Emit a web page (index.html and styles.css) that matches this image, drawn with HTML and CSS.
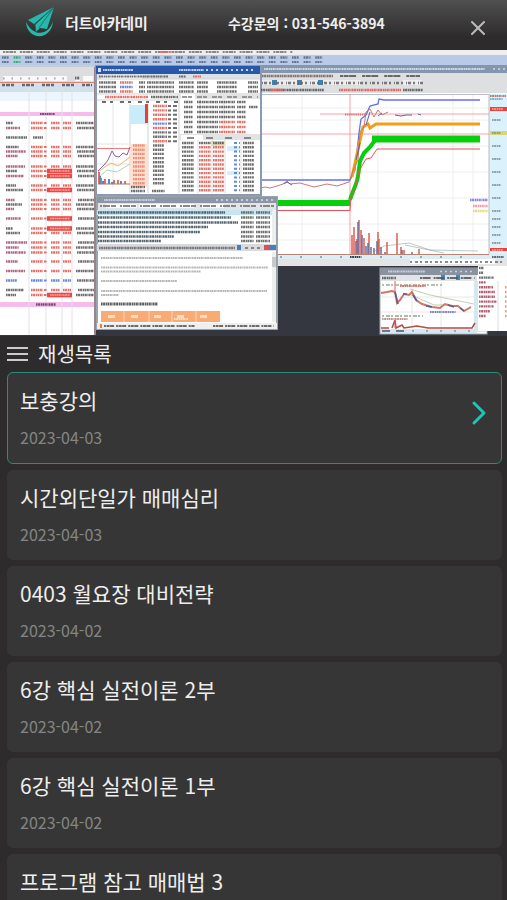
FILE: index.html
```html
<!DOCTYPE html>
<html lang="ko">
<head>
    <meta charset="UTF-8">
    <meta name="viewport" content="width=device-width, initial-scale=1.0">
    <title>더트아카데미</title>
    <link rel="stylesheet" href="styles.css">
</head>
<body>
    <header class="header">
        <a class="logo" href="#">
            <svg class="logo-icon" viewBox="0 0 28 30" aria-hidden="true">
                <path d="M28 0 L2 13 L8 17 Z M28 0 L9 18 L10 25 L14 21 L21 22 Z" fill="#25b8ab"/>
                <path d="M28 0 L9 17 L10 24 M28 0 L13 21" fill="none" stroke="#23635f" stroke-width=".8"/>
                <path d="M0 15 C1 34 26 34 27 14 C23 28 8 31 0 15 Z" fill="#25b8ab"/>
            </svg>
            <span>더트아카데미</span>
        </a>
        <p class="phone">수강문의 : 031-546-3894</p>
        <button class="close" aria-label="닫기">
            <svg viewBox="0 0 14 14"><path d="M1 1 L13 13 M13 1 L1 13"/></svg>
        </button>
    </header>

    <main class="main">
        <svg class="video" viewBox="0 50 507 286" role="img" aria-label="강의 영상">
            <rect y="50" width="507" height="286" fill="#343740"/>
            <!-- menu and toolbar -->
            <rect y="50" width="507" height="5" fill="#eeeeef"/>
            <rect y="55" width="507" height="11" fill="#b9cae9"/>
            <rect y="65" width="507" height="6" fill="#c7ccd5"/>
            <!-- stock list -->
            <rect y="67" width="96" height="268" fill="#fff"/>
            <rect y="67" width="96" height="16" fill="#dcdddf"/>
            <path d="M3 76h64v5H3zM75 76h5v5h-5zM83 76h10v5H83z" fill="#f9f9f9"/>
            <rect y="83" width="95" height="9" fill="#d2e0ee"/>
            <rect y="92" width="95" height="9" fill="#edf6fd"/>
            <rect y="112" width="95" height="4" fill="#f5bcec"/>
            <rect y="302" width="95" height="5" fill="#f5bcec"/>
            <path d="M29 83V335M46 83V335M62 83V335M72 83V335" stroke="#e3e0e6"/>
            <path d="M0 82.500H95" stroke="#d78378"/>
            <path d="M95 67V335" stroke="#98858a" stroke-width="2"/>
            <!-- big chart -->
            <rect x="260" y="66" width="247" height="200" fill="#fff"/>
            <rect x="260" y="65" width="247" height="8" fill="#8496ae"/>
            <rect x="260" y="73" width="247" height="20" fill="#dedfe1"/>
            <path d="M261 80h100v5H261zM403 80h19v5h-19z" fill="#eee"/>
            <path d="M272 80h5v5h-5zM297 80h5v5h-5zM318 80h5v5h-5z" fill="#3c82b3"/>
            <rect x="489" y="94" width="18" height="161" fill="#dbf1fb"/>
            <rect x="260" y="254" width="247" height="5" fill="#dbeef5"/>
            <rect x="260" y="259" width="247" height="7" fill="#e4e4e5"/>
            <path d="M410 259h85v5h-85z" fill="#fff"/>
            <path d="M260 108H489M260 120H489M260 146H489M260 172H489M260 198H489M260 224H489M260 240H489M302 94V254M378 94V254M453 94V254M473 94V254" stroke="#eeeeef"/>
            <path d="M260 94.500H489M489 94V254" stroke="#b8bdc5" fill="none"/>
            <path d="M350 94V254M260 134H489M320 114H489" stroke="#f18a95" stroke-width=".8"/>
            <path d="M277 203H350" stroke="#07cf0b" stroke-width="6"/>
            <path d="M350 200C353 190 357 184 358 176L360 161L364 153L370 147L376 139H480" fill="none" stroke="#07cf0b" stroke-width="4"/>
            <path d="M372 139H480" stroke="#07cf0b" stroke-width="7"/>
            <path d="M260 180H350L355 170L359 133L361 119L366 115L370 106L378 104L379 99L384 100H480" fill="none" stroke="#6670e5" stroke-width="1.300"/>
            <path d="M352 177L359 145L363 127L368 124L370 128L376 124H480" fill="none" stroke="#f49d16" stroke-width="3"/>
            <path d="M277 210.500H350L351 196L355 189L359 171L366 159L371 158L377 149H480" fill="none" stroke="#e95058" stroke-width="1"/>
            <path d="M260 188L265 187L270 188L277 186L283 184L287 181L290 184L300 183L314 187L327 184L337 186L349 182L354 168L358 160L360 132L364 127L366 112L370 109L374 117L378 110L382 115L388 112" fill="none" stroke="#c67970" stroke-width="1"/>
            <path d="M284 184L287 182L292 185M356 160L360 143M366 125L370 112M378 116L382 113M395 115L401 116L406 115L412 115M418 114L421 115" fill="none" stroke="#5961ad" stroke-width="1"/>
            <path d="M345 114.500H366" stroke="#e86c6c" stroke-width="2" stroke-dasharray="1.300 .8"/>
            <path d="M373 252L384 246L409 243L430 250L478 251M405 245L444 253" fill="none" stroke="#89a695" stroke-width=".6"/>
            <path id="volume" d="M352 254V235M354 254V227M357 254V239M359 254V220M361 254V230M364 254V238M369 254V233M378 254V232M379 254V239M387 254V242M397 254V233M401 254V247M404 254V250M419 254V249" stroke="#dc5f50" stroke-width="1.500" fill="none"/>
            <path d="M356 254V241M358 254V222M362 254V235M366 254V246M368 254V243M371 254V247M374 254V248M377 254V241M381 254V247M385 254V252M402 254V250M412 254V252" stroke="#6b6c9f" stroke-width="1.500" fill="none"/>
            <path d="M260 254.500H489" stroke="#b78372" stroke-width="1"/>
            <path d="M490 107h17v4h-17zM490 248h17v3h-17z" fill="#ed4038"/>
            <path d="M490 131h17v4h-17z" fill="#dbd86a"/>
            <!-- current price window -->
            <rect x="96" y="66" width="165" height="129" fill="#fff" stroke="#8b99b2" stroke-width="2"/>
            <rect x="96" y="66" width="164" height="8" fill="#2858aa"/>
            <rect x="98" y="68" width="3" height="4" fill="#d3def8"/>
            <rect x="97" y="74" width="163" height="5" fill="#dde0e4"/>
            <path d="M101 75h41v4h-41z" fill="#fff"/>
            <path d="M97 79H260M97 94H260M97 100H179M179 94V193M130 104V193M148 104V193" stroke="#cfd1d4" fill="none"/>
            <path d="M130 105H146V124H130z" fill="#c9edf8"/>
            <rect x="145" y="104" width="3" height="19" fill="#e54137"/>
            <path d="M113 104V188M97 144H130M97 164H130" stroke="#e5e5e5"/>
            <path d="M97 148.500H130" stroke="#f27979"/>
            <rect x="130" y="144" width="18" height="43" fill="#ffe0d2"/>
            <path d="M98 171L104 165L108 160L112 151L115 156L119 157L123 153L127 155L130 147" fill="none" stroke="#8765ab"/>
            <path d="M98 172L105 167L111 163L118 166L130 157" fill="none" stroke="#ebb660"/>
            <path d="M98 178L107 170L117 172L130 164" fill="none" stroke="#9ac6b1" stroke-width=".8"/>
            <path d="M99 184V172M101 184V178M105 184V179M114 184V180M118 184V180M125 184V181" stroke="#e26f57" stroke-width="2"/>
            <path d="M100 184V176M103 184V181M109 184V179M112 184V182M121 184V181" stroke="#508cc4" stroke-width="2"/>
            <path d="M98 184H130" stroke="#a77867"/>
            <path d="M179 94H260V99H179zM179 134H260V140H179z" fill="#e2e3e4"/>
            <rect x="181" y="94" width="14" height="5" fill="#fff"/>
            <rect x="181" y="135" width="22" height="5" fill="#fff"/>
            <path d="M200 99V132M224 99V132M198 140V193M212 140V193M225 140V193M241 140V193" stroke="#dedede"/>
            <path d="M211 141h14v5h-14z" fill="#dce6b5"/>
            <path d="M227 146h13v5h-13zM227 171h13v4h-13z" fill="#d6efff"/>
            <!-- news window -->
            <rect x="97" y="197" width="180" height="132" fill="#fff" stroke="#9ba3ac" stroke-width="2"/>
            <rect x="97" y="197" width="180" height="6" fill="#8d96a4"/>
            <rect x="98" y="203" width="178" height="7" fill="#e3e4e5"/>
            <path d="M106 204h31v4h-31zM139 204h55v4h-55zM202 204h22v4h-22z" fill="#fafafa"/>
            <rect x="97" y="210" width="176" height="5" fill="#c7e6f5"/>
            <rect x="97" y="244" width="179" height="7" fill="#d8dadd"/>
            <path d="M237 245h4v5h-4zM270 245h6v5h-6z" fill="#437fc3"/>
            <path d="M264 245h6v5h-6z" fill="#e24c59"/>
            <path d="M272 211h4v32h-4zM272 252h4v70h-4z" fill="#eeeeef"/>
            <path d="M272 257h4v10h-4z" fill="#c8c9cc"/>
            <rect x="101" y="311" width="119" height="11" fill="#faaa73"/>
            <path d="M124 311V322M149 311V322M172 311V322M196 311V322" stroke="#ffd5ba"/>
            <rect x="97" y="323" width="180" height="6" fill="#eeefef"/>
            <path d="M100 324h2v4h-2z" fill="#ed7a44"/>
            <!-- small chart -->
            <rect x="380" y="268" width="107" height="66" fill="#fff" stroke="#9da7b2"/>
            <rect x="380" y="268" width="98" height="7" fill="#8992a1"/>
            <rect x="381" y="275" width="96" height="6" fill="#e1e3e5"/>
            <path d="M441 275h4v5h-4zM456 275h4v5h-4z" fill="#4788bd"/>
            <path d="M474 281h12v51h-12zM381 329h96v4h-96z" fill="#d5e8ef"/>
            <path d="M412 282V330M441 282V330M381 297H474M381 312H474" stroke="#ebe6e6"/>
            <path d="M410 289L430 295L474 304M409 294L434 305L448 305" fill="none" stroke="#a3bc9c" stroke-width=".7"/>
            <path d="M381 293L387 292L392 291L395 292L397 303L400 300L404 294L409 295L412 292L416 300L422 304L432 307L440 308L445 304L452 306L458 306L464 311L471 307" fill="none" stroke="#cc7867" stroke-width="2"/>
            <path d="M395 292L398 304M403 294L407 294M413 295L417 301M426 306L432 307M448 305L454 307M460 308L464 311" fill="none" stroke="#545d9d" stroke-width="1.500"/>
            <path d="M381 328H389M392 328L395 320L396 328L402 325L404 328L417 326L428 328H472L475 323" fill="none" stroke="#b24c45" stroke-width="1.500"/>
            <path d="M395 281V292M395 320V328" stroke="#df5b66"/>
            <!-- right side list -->
            <rect x="478" y="266" width="29" height="65" fill="#fff"/>
            <path d="M498 281V331" stroke="#ddd"/>
            <g id="rows" opacity=".85"></g>
        </svg>

        <section class="playlist">
            <div class="playlist-head">
                <button class="menu" aria-label="메뉴">
                    <span></span>
                    <span></span>
                    <span></span>
                </button>
                <h1>재생목록</h1>
            </div>
            <nav class="list">
                <a class="item active" href="#">
                    <div>
                        <h2>보충강의</h2>
                        <p>2023-04-03</p>
                    </div>
                    <svg class="arrow" viewBox="0 0 16 26" aria-hidden="true"><path d="M3 3 L13 13 L3 23"/></svg>
                </a>
                <a class="item" href="#">
                    <div>
                        <h2>시간외단일가 매매심리</h2>
                        <p>2023-04-03</p>
                    </div>
                </a>
                <a class="item" href="#">
                    <div>
                        <h2>0403 월요장 대비전략</h2>
                        <p>2023-04-02</p>
                    </div>
                </a>
                <a class="item" href="#">
                    <div>
                        <h2>6강 핵심 실전이론 2부</h2>
                        <p>2023-04-02</p>
                    </div>
                </a>
                <a class="item" href="#">
                    <div>
                        <h2>6강 핵심 실전이론 1부</h2>
                        <p>2023-04-02</p>
                    </div>
                </a>
                <a class="item" href="#">
                    <div>
                        <h2>프로그램 참고 매매법 3</h2>
                    </div>
                </a>
            </nav>
        </section>
    </main>

    <script src="script.js"></script>
</body>
</html>
```
FILE: styles.css
```css
* {
    margin: 0;
    padding: 0;
    box-sizing: border-box;
}

body {
    display: flex;
    flex-direction: column;
    height: 100vh;
    font-family: "Noto Sans CJK KR", "Noto Sans", sans-serif;
    color: #eee;
    background-color: #2d2b2c;
}

button {
    border: none;
    background: none;
    cursor: pointer;
}

a {
    color: inherit;
    text-decoration: none;
}

.header {
    display: flex;
    justify-content: space-between;
    flex-shrink: 0;
    height: 50px;
    padding: 0 16px 0 26px;
    background: linear-gradient(#505050, #2d2b2c 75%);
}

.logo {
    display: flex;
    align-items: center;
    gap: 11px;
    height: 44px;
    font-size: 15px;
    font-weight: 700;
    white-space: nowrap;
}

.logo-icon {
    flex-shrink: 0;
    width: 28px;
    height: 30px;
}

.phone {
    font-size: 14px;
    font-weight: 700;
    line-height: 46px;
    white-space: nowrap;
}

.close {
    width: 26px;
    height: 56px;
    padding: 0 6px;
}

.close svg {
    display: block;
    width: 14px;
    height: 14px;
}

.close path {
    stroke: #bbb;
    stroke-width: 2;
    stroke-linecap: round;
}

.main {
    display: flex;
    flex-direction: column;
    flex: 1;
    min-height: 0;
}

.video {
    display: block;
    flex-shrink: 0;
    width: 100%;
}

.playlist {
    display: flex;
    flex-direction: column;
    flex: 1;
    min-height: 0;
    padding: 0 5px 0 7px;
}

.playlist-head {
    display: flex;
    align-items: center;
    gap: 10px;
    flex-shrink: 0;
    height: 36px;
}

.playlist-head h1 {
    font-size: 20px;
    font-weight: 400;
    line-height: 36px;
}

.menu {
    display: flex;
    flex-direction: column;
    gap: 4px;
    width: 21px;
}

.menu span {
    height: 2px;
    background-color: #ccc;
}

.list {
    display: flex;
    flex-direction: column;
    gap: 6px;
    overflow-y: auto;
    scrollbar-width: none;
}

.item {
    display: flex;
    justify-content: space-between;
    flex-shrink: 0;
    min-height: 90px;
    padding: 11px 14px 13px 13px;
    border-radius: 6px;
    background-color: #363636;
}

.item.active {
    padding-left: 12px;
    border: 1px solid #2c8b7e;
}

.item h2 {
    font-size: 21px;
    font-weight: 400;
    line-height: 32px;
}

.item p {
    margin-top: 8px;
    font-size: 16px;
    line-height: 26px;
    color: #858585;
}

.arrow {
    align-self: center;
    width: 16px;
    height: 26px;
    margin-bottom: 8px;
}

.arrow path {
    fill: none;
    stroke: #1fc5b4;
    stroke-width: 3;
    stroke-linecap: round;
    stroke-linejoin: round;
}
```
FILE: script.js
```javascript
const rows = document.getElementById('rows');
const red = '#dc5a50';
const dark = '#555';
const plum = '#a34b6e';
const blue = '#4c76cf';

function line(x1, x2, y, color, height, dash) {
    const el = document.createElementNS('http://www.w3.org/2000/svg', 'path');
    el.setAttribute('d', 'M' + x1 + ' ' + y + 'H' + x2);
    el.setAttribute('stroke', color);
    el.setAttribute('stroke-width', height || 2.4);
    el.setAttribute('stroke-dasharray', dash || '1.6 .5 2.2 .6 1.2 .4');
    rows.appendChild(el);
}

// menu and toolbar
line(3, 293, 52, '#777', 1.8, '2 .7 3 .6 4 .6 2 4');
line(160, 173, 52, red, 2);
for (let x = 2; x < 320; x += 11.6) {
    const color = x > 12 && x < 20 ? '#23a95a' : '#56647e';
    line(x, x + 7, 57.5, color, 2.4);
    line(x, x + 7, 62, color, 2);
}
line(3, 65, 78.500, '#999', 2, '1.5 7');
line(2, 92, 85, dark, 2.4, '3 1 4 1 3 8');
line(75, 80, 78, dark, 3);

// stock list: y, name colour, highlighted cell
[
    [123, dark, 0], [128, plum, 0], [137.5, dark, 0], [147, dark, 0], [151.5, plum, 0], [156, plum, 0],
    [166.5, plum, 0], [171, dark, 1], [176, plum, 1], [185.5, dark, 0], [190, dark, 1],
    [200, plum, 0], [204.5, dark, 0], [209, plum, 0], [218.5, plum, 1], [228.5, dark, 1], [233, dark, 0],
    [242.5, plum, 0], [247.5, plum, 0], [252.5, plum, 0], [261.5, plum, 0], [271, plum, 0],
    [280.5, blue, 0], [290, dark, 0], [295, dark, 1]
].forEach(function (row, i) {
    const y = row[0];
    const price = row[1] === blue ? blue : red;
    line(6, 13 + i * 7 % 15, y, row[1]);
    if (y === 137.5) {
        line(33, 43, y, dark);
        return;
    }
    line(31, 43, y, price);
    line(44, 46.5, y, price, 2, '3 0');
    if (row[2]) {
        line(47, 72, y, '#ea2925', 4.6, '30 0');
        line(50, 70, y, '#ff9690', 1.6);
    } else {
        line(51, 60, y, price);
        line(63, 71, y, price);
    }
    line(76 + i % 3, 94, y, dark);
});
line(40, 55, 114, '#5e3b5e', 2);
line(36, 56, 304.5, '#5e3b5e', 2.5);

// current price window
line(103, 133, 70, '#dbe7ff', 2);
line(179, 204, 70, '#dbe7ff', 2);
line(206, 254, 70, '#dbe7ff', 2, '2 3');
line(99, 168, 76.5, dark, 2);
line(179, 186, 76.5, dark, 2);
line(193, 201, 76.500, red, 2);
[82.5, 87, 91.5].forEach(function (y) {
    line(99, 116, y, dark);
    line(120, 133, y, y === 87 ? blue : red);
    line(139, 145, y, dark);
    line(147, 174, y, dark);
    line(179, 194, y, dark);
    line(197, 208, y, dark);
    line(217, 237, y, dark);
    line(248, 258, y, dark);
});
line(105, 148, 97, red, 2.5);
line(151, 178, 97, dark, 2.5);
line(182, 258, 97, '#888', 2, '5 1 4 5');
line(102, 178, 102, dark, 2, '4 4 3 7');
for (let y = 106; y < 144; y += 4.4) {
    line(153, 167, y, y > 121 && y < 128 ? blue : y > 132 && y < 138 ? dark : red);
    line(168, 177, y, dark, 2, '3 2 5 1');
}
for (let y = 145.5; y < 186; y += 4.2) {
    line(133, 145, y, '#e88369');
    line(153, 164, y, dark);
}
line(131, 145, 187, dark);
line(131, 145, 191, dark);
line(152, 165, 191, dark);
for (let y = 102; y < 133; y += 5) {
    line(184, 193, y, dark);
    line(197, 218, y, dark);
    line(219, 235, y, y > 120 ? red : dark);
    line(237, 246, y, y > 120 ? red : dark);
}
line(249, 258, 107, dark);
line(187, 255, 138, '#777', 2, '7 12');
for (let y = 143; y < 194; y += 4.3) {
    line(182, 194, y, dark);
    line(199, 211, y, y < 145 ? dark : red);
    line(213, 224, y, y < 145 ? dark : red);
    line(234, 240, y, blue, 2, '3 2');
    line(243, 254, y, dark);
}

// news window
line(104, 155, 200, '#d1d7df', 2);
line(216, 273, 200, '#d1d7df', 2, '2 3');
line(100, 274, 206, '#777', 2, '2 1 7 1 5 4');
[212.500, 217.5, 222.5, 227, 232, 236.5, 241].forEach(function (y, i) {
    line(98, [225, 231, 238, 208, 200, 174, 161][i], y, '#384b58');
    line(241, 254, y, dark);
    line(256, 270, y, dark);
});
line(99, 235, 248, '#666');
line(245, 263, 248, '#777', 2, '3 3');
[[258, 243], [267.5, 268], [271.5, 201], [281, 177], [291, 267], [295, 119]].forEach(function (row) {
    line(101, row[1], row[0], '#aaa', 2);
});
line(101, 158, 304, '#444', 3);
line(108, 216, 316.5, '#ffe8d8', 3, '7 16');
line(174, 188, 319, '#ffe8d8', 2);
line(104, 195, 326, dark, 2, '2 .6 3 .5 4 2');
line(213, 274, 326, dark, 2, '2 .6 3 .5 4 2');

// big chart
line(264, 485, 69, '#dbe4ef', 2);
line(493, 505, 69, '#dbe4ef', 1.500, '2 3');
line(262, 333, 76, '#77605c', 2.6);
line(340, 420, 76, dark, 2, '3 .6 5 .5 7 6');
line(262, 424, 83, '#666', 2.6, '1 1 3 2 2 3');
line(261, 324, 90, dark, 2.500);
line(269, 283, 90, red, 2.500);
line(339, 401, 90, red, 2.500);
line(403, 423, 90, dark, 2.500);
line(490, 506, 96, red, 2);
line(490, 503, 99, '#54b4cf', 2);
for (let y = 120; y < 250; y += y < 210 ? 13 : 8) {
    line(492, 501, y, '#86949d', 2);
}
line(492, 503, 109, '#fff', 1);
line(492, 503, 250, '#fff', 1);
line(470, 488, 200, '#7771d1', 2.5);
line(473, 488, 206, '#ea8f9b', 2.5);
line(473, 488, 211, '#ded57b', 2.5);
line(280, 480, 257, '#71848d', 1.5, '2 18');
line(350, 360, 257, '#222', 2);
line(410, 502, 262, '#777', 2, '2 3 3 2');
line(492, 504, 257, dark, 2);

// small chart and the list next to it
line(388, 425, 271.500, '#d5dce3', 2);
line(440, 475, 271.500, '#d5dce3', 1.500, '2 3');
line(382, 396, 278, dark, 2.5);
line(420, 475, 278, dark, 2, '2 .6 8 3');
line(382, 442, 285, '#a9b49c', 2, '2 2 4 1');
line(400, 426, 286, red, 2);
line(430, 456, 312, '#6a73d4', 2);
line(382, 423, 316, '#9eb19c', 2, '2 2 4 1');
line(382, 408, 319, '#b98486', 2);
line(382, 405, 331, '#567', 2, '8 6');
line(412, 470, 331, '#789', 1.500, '2 12');
for (let y = 268, i = 0; y < 318; y += 4.8, i++) {
    line(479, [484, 483, 494, 486, 493, 495, 495, 497, 494, 490, 486][i], y, i < 3 ? dark : '#a4455a');
    if (i > 3) {
        line(505, 507, y, '#e78b61', 2.5);
    }
}
```
